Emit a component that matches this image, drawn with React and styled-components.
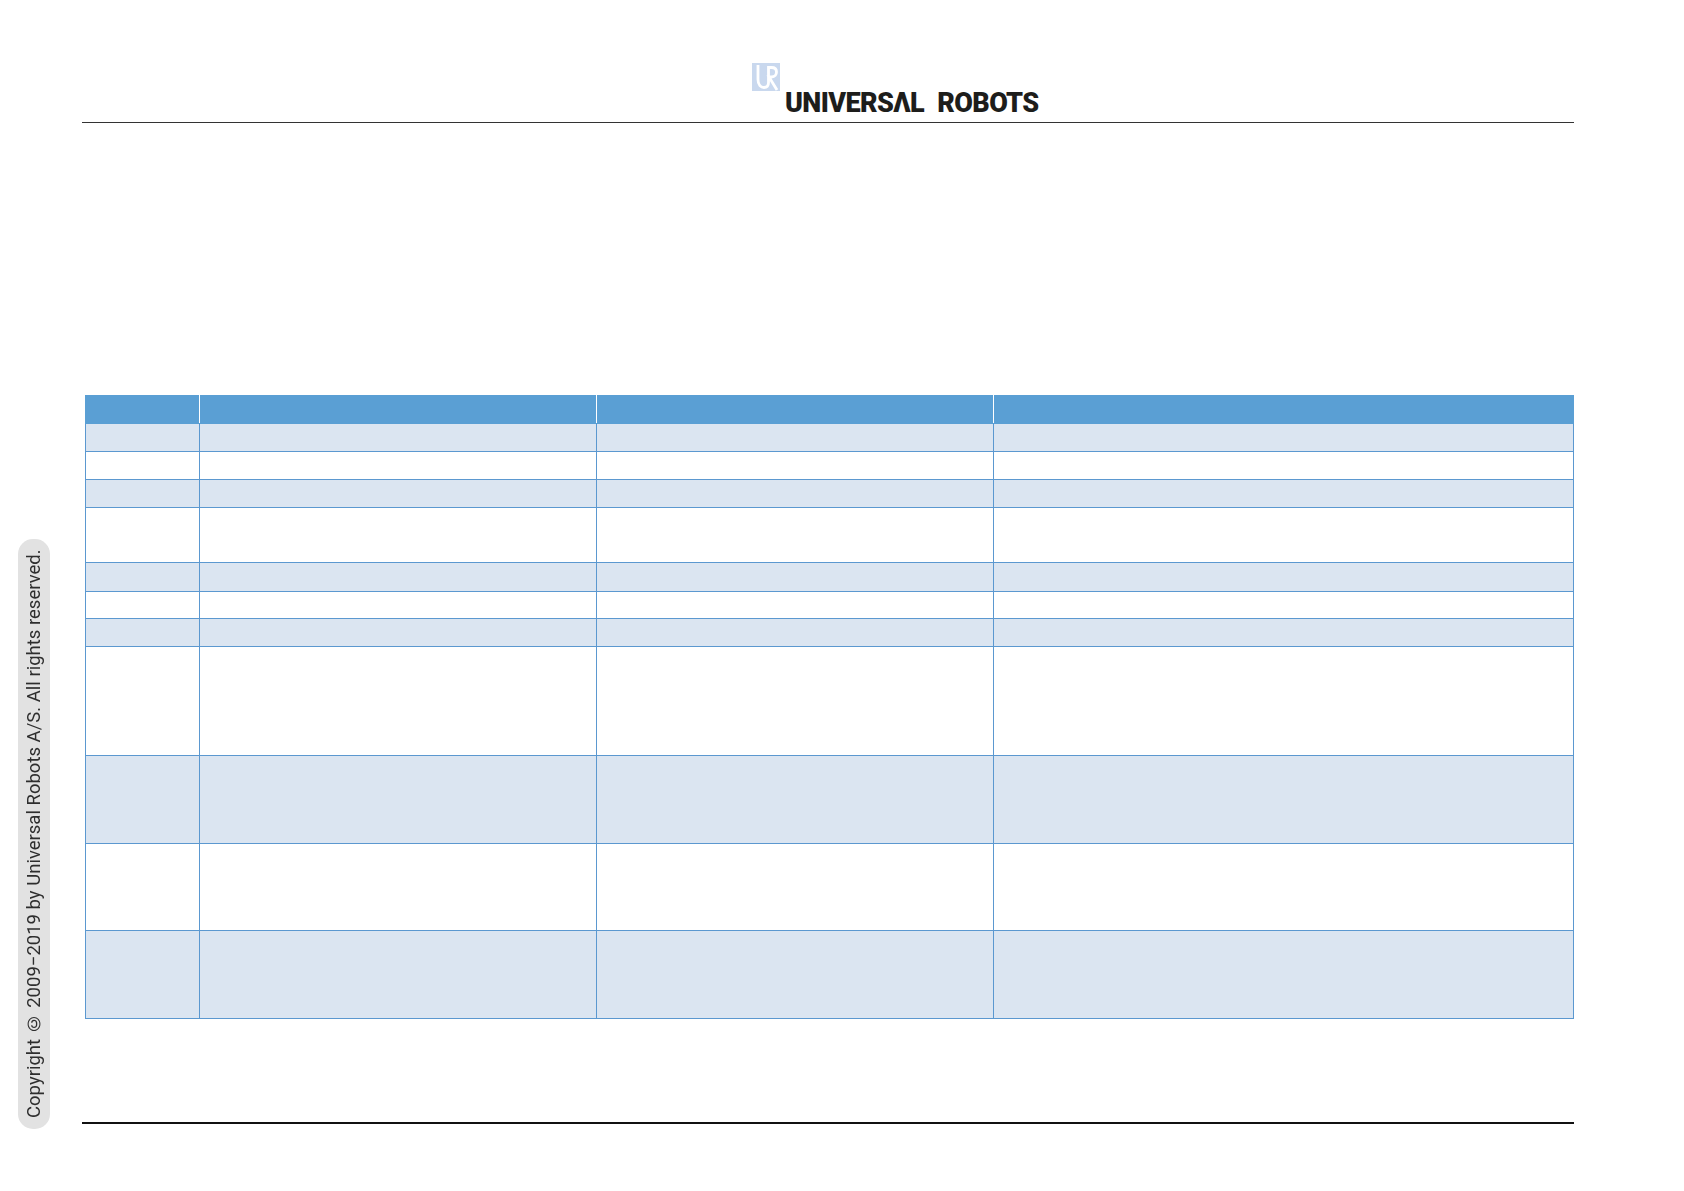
import React from "react";
import styled, { createGlobalStyle } from "styled-components";

const rows = [
  { height: 28, band: true },
  { height: 28 },
  { height: 28, band: true },
  { height: 55 },
  { height: 29, band: true },
  { height: 27 },
  { height: 28, band: true },
  { height: 109 },
  { height: 88, band: true },
  { height: 87 },
  { height: 88, band: true },
];

const App = () => {
  return (
    <Page>
      <GlobalStyle />
      <CopyrightStamp>Copyright © 2009−2019 by Universal Robots A/S. All rights reserved.</CopyrightStamp>
      <Sheet>
        <Header>
          <LogoMark viewBox="0 0 28 28" aria-hidden="true">
            <rect width="28" height="28" fill="#c9d8ee" />
            <path
              d="M6 2v14.500c0 5.500 3 8 6 8 2.500 0 4.500-1.500 4.500-5V4.500h3c3.500 0 5 2 5 4.500s-1.500 5-5 5h-2.500L25 27"
              fill="none"
              stroke="#fff"
              strokeWidth="2.800"
            />
          </LogoMark>
          <Wordmark>UNIVERSΛL ROBOTS</Wordmark>
        </Header>
        <DataTable>
          <colgroup>
            <col style={{ width: 114 }} />
            <col style={{ width: 397 }} />
            <col style={{ width: 397 }} />
            <col />
          </colgroup>
          <thead>
            <tr>
              <HeadCell />
              <HeadCell />
              <HeadCell />
              <HeadCell />
            </tr>
          </thead>
          <tbody>
            {rows.map((row, i) => (
              <BodyRow key={i} $band={row.band} style={{ height: row.height }}>
                <BodyCell />
                <BodyCell />
                <BodyCell />
                <BodyCell />
              </BodyRow>
            ))}
          </tbody>
        </DataTable>
        <FooterRule />
      </Sheet>
    </Page>
  );
};

export default App;

const GlobalStyle = createGlobalStyle`
  html, body {
    margin: 0;
    padding: 0;
    background: #fff;
    font-family: "Roboto", "Liberation Sans", sans-serif;
  }
`;

const Page = styled.div`
  width: 1684px;
  height: 1191px;
  overflow: hidden;
  display: flex;
  align-items: flex-start;
  padding-left: 18px;
  box-sizing: border-box;
`;

const CopyrightStamp = styled.div`
  flex: none;
  margin-top: 539px;
  width: 32px;
  height: 590px;
  box-sizing: border-box;
  display: flex;
  align-items: center;
  justify-content: center;
  border-radius: 15px;
  background: #e2e2e2;
  color: #2e2e2e;
  font-size: 18.500px;
  font-weight: 400;
  line-height: 32px;
  white-space: nowrap;
  writing-mode: vertical-rl;
  transform: rotate(180deg);
  filter: blur(0.5px);
`;

const Sheet = styled.div`
  flex: none;
  width: 1492px;
  margin-left: 32px;
`;

const Header = styled.header`
  height: 123px;
  box-sizing: border-box;
  padding: 63px 0 0 670px;
  display: flex;
  align-items: flex-start;
  gap: 5px;
  border-bottom: 1px solid #333;
`;

const LogoMark = styled.svg`
  width: 28px;
  height: 28px;
  flex: none;
`;

const Wordmark = styled.div`
  margin-top: 24px;
  font-family: "Roboto", sans-serif;
  font-size: 27px;
  line-height: 32px;
  font-weight: 900;
  letter-spacing: -0.6px;
  word-spacing: 7px;
  color: #1d1d1b;
  white-space: nowrap;
`;

const DataTable = styled.table`
  margin: 272px 0 0 3px;
  width: 1489px;
  table-layout: fixed;
  border-collapse: collapse;
`;

const HeadCell = styled.th`
  height: 27px;
  padding: 0;
  background: #5a9fd4;
  border: 1px solid #5a9fd4;
  border-right-color: #fff;

  &:last-child {
    border-right-color: #5a9fd4;
  }
`;

const BodyRow = styled.tr`
  background: ${(props) => (props.$band ? "#dbe5f1" : "#fff")};
`;

const BodyCell = styled.td`
  padding: 0;
  border: 1px solid #5b98d0;
`;

const FooterRule = styled.div`
  margin-top: 103px;
  height: 2px;
  background: #111;
`;
